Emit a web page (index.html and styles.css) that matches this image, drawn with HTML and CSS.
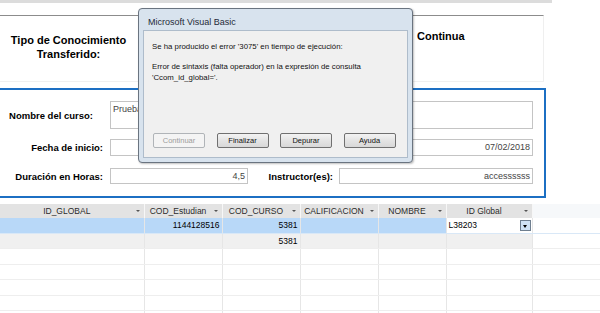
FILE: index.html
```html
<!DOCTYPE html>
<html lang="es">
  <head>
    <meta charset="UTF-8" />
    <meta name="viewport" content="width=device-width, initial-scale=1.0" />
    <title>Cursos - Microsoft Access</title>
    <link rel="stylesheet" href="styles.css">
  </head>
  <body>
    <!-- top strip of the form -->
    <div class="top-band"></div>

    <div class="panel-top">
      <div class="tipo">Tipo de Conocimiento<br />Transferido:</div>
      <div class="continua">Continua</div>
    </div>

    <!-- course details -->
    <div class="course">
      <div class="row">
        <label class="lbl lbl-nombre">Nombre del curso:</label>
        <div class="box box-big">Prueba</div>
      </div>
      <div class="row">
        <label class="lbl">Fecha de inicio:</label>
        <div class="box box-wide right">07/02/2018</div>
      </div>
      <div class="row">
        <label class="lbl">Duración en Horas:</label>
        <div class="box box-hours right">4,5</div>
        <label class="lbl lbl-instr">Instructor(es):</label>
        <div class="box box-instr right">accessssss</div>
      </div>
    </div>

    <!-- datasheet -->
    <table class="sheet">
      <colgroup>
        <col class="c1" /><col class="c2" /><col class="c3" /><col class="c4" /><col class="c5" /><col class="c6" /><col />
      </colgroup>
      <thead>
        <tr>
          <th><span>ID_GLOBAL</span><i class="arr"></i></th>
          <th><span>COD_Estudian</span><i class="arr"></i></th>
          <th><span>COD_CURSO</span><i class="arr"></i></th>
          <th><span>CALIFICACION</span><i class="arr"></i></th>
          <th><span>NOMBRE</span><i class="arr"></i></th>
          <th><span>ID Global</span><i class="arr"></i></th>
          <th class="blank"></th>
        </tr>
      </thead>
      <tbody>
        <tr class="sel">
          <td></td>
          <td class="num">1144128516</td>
          <td class="num">5381</td>
          <td></td>
          <td></td>
          <td class="combo"><span>L38203</span><b class="drop"></b></td>
          <td class="out"></td>
        </tr>
        <tr class="new">
          <td></td>
          <td></td>
          <td class="num">5381</td>
          <td></td>
          <td></td>
          <td></td>
          <td class="out"></td>
        </tr>
        <tr><td></td><td></td><td></td><td></td><td></td><td></td><td class="out"></td></tr>
        <tr><td></td><td></td><td></td><td></td><td></td><td></td><td class="out"></td></tr>
        <tr><td></td><td></td><td></td><td></td><td></td><td></td><td class="out"></td></tr>
        <tr><td></td><td></td><td></td><td></td><td></td><td></td><td class="out"></td></tr>
        <tr><td></td><td></td><td></td><td></td><td></td><td></td><td class="out"></td></tr>
      </tbody>
    </table>

    <!-- runtime error message box -->
    <div class="msgbox">
      <div class="msg-title">Microsoft Visual Basic</div>
      <div class="msg-body">
        <p class="msg-line">Se ha producido el error '3075' en tiempo de ejecución:</p>
        <p class="msg-line">Error de sintaxis (falta operador) en la expresión de consulta<br />'Ccom_id_global='.</p>
        <div class="msg-buttons">
          <button class="btn" disabled>Continuar</button>
          <button class="btn">Finalizar</button>
          <button class="btn">Depurar</button>
          <button class="btn">Ayuda</button>
        </div>
      </div>
    </div>
  </body>
</html>
```

FILE: styles.css
```css
body {
  margin: 0;
  width: 600px;
  height: 313px;
  overflow: hidden;
  position: relative;
  background: #fff;
  font-family: "Liberation Sans", Arial, sans-serif;
  color: #000;
}

.top-band {
  width: 552px;
  height: 3px;
  background: #dcdcdc;
}

.panel-top {
  display: flex;
  width: 543px;
  height: 65px;
  margin-top: 12px;
  border-top: 1px solid #8c8c8c;
  border-right: 1px solid #efefef;
  border-bottom: 1px solid #f0f0f0;
  font-weight: bold;
  font-size: 11px;
}

.tipo {
  width: 137px;
  margin-top: 17px;
  text-align: center;
  line-height: 14px;
}

.continua {
  margin-left: 280px;
  margin-top: 14px;
}

.course {
  width: 544px;
  margin-top: 6px;
  border: 2px solid #1c6fc3;
  border-left: none;
  padding: 11px 0 12px 0;
  display: flex;
  flex-direction: column;
  gap: 10px;
}

.course .row:last-child {
  margin-top: 2px;
}

.row {
  display: flex;
  align-items: center;
}

.lbl {
  width: 103px;
  margin-right: 7px;
  text-align: right;
  font-weight: bold;
  font-size: 9.5px;
}

.lbl-nombre {
  padding-right: 10px;
  width: 93px;
}

.lbl-instr {
  width: 85px;
  margin-right: 6px;
}

.box {
  box-sizing: border-box;
  height: 16px;
  border: 1px solid #c4c4c4;
  background: #fff;
  font-size: 9px;
  color: #444;
  padding: 1px 2px 0 2px;
  line-height: 13px;
}

.right {
  text-align: right;
}

.box-big {
  width: 423px;
  height: 28px;
}

.box-wide {
  width: 423px;
  height: 17px;
}

.box-hours {
  width: 138px;
}

.box-instr {
  width: 194px;
}

/* datasheet */
.sheet {
  margin-top: 6px;
  width: 600px;
  border-collapse: collapse;
  table-layout: fixed;
  font-size: 8.5px;
}

.c1 { width: 144px; }
.c2 { width: 78px; }
.c3 { width: 78px; }
.c4 { width: 78px; }
.c5 { width: 68px; }
.c6 { width: 86px; }

.sheet th {
  height: 14px;
  padding: 0;
  background: #e3e3e3;
  border-right: 1px solid #f7f7f7;
  font-weight: normal;
  color: #2b2b2b;
  position: relative;
}

.sheet th span {
  display: block;
  padding-right: 10px;
  text-align: center;
}

.sheet th.blank {
  background: #f6f8fa;
  border: none;
}

.arr {
  position: absolute;
  right: 4px;
  top: 6px;
  border-left: 2px solid transparent;
  border-right: 2px solid transparent;
  border-top: 2px solid #555;
}

.sheet td {
  height: 14.5px;
  padding: 0 2px;
  border-right: 1px solid #e6e6e6;
  border-bottom: 1px solid #eeeeee;
}

.sheet td.out {
  border-right: none;
}

.sheet td.num {
  text-align: right;
}

.sel td {
  background: #b8d8f8;
  border-bottom-color: #d9e8f7;
}

.sel td.out,
.sel td.combo {
  background: #fff;
}

.new td {
  background: #f0f0f0;
}

.new td.out {
  background: #fff;
}

.combo {
  position: relative;
}

.drop {
  position: absolute;
  right: 1px;
  top: 2px;
  width: 9px;
  height: 9px;
  border: 1px solid #6f7f90;
  background: #cfe2f5;
}

.drop::after {
  content: "";
  position: absolute;
  left: 2px;
  top: 4px;
  border-left: 2.5px solid transparent;
  border-right: 2.5px solid transparent;
  border-top: 3px solid #000;
}

/* message box */
.msgbox {
  position: absolute;
  left: 138px;
  top: 8px;
  width: 273px;
  height: 153px;
  border: 1px solid #6a7480;
  border-radius: 4px;
  background: #d8e3ee;
  box-shadow: 1px 1px 2px rgba(0, 0, 0, 0.25);
}

.msg-title {
  height: 21px;
  padding-left: 9px;
  line-height: 27px;
  font-size: 9px;
  color: #1e2a38;
}

.msg-body {
  box-sizing: border-box;
  margin: 0 4px;
  height: 128px;
  background: #f0f0f0;
  border: 1px solid #aebccb;
  padding: 10px 8px 0 8px;
  font-size: 7.8px;
  color: #111;
}

.msg-line {
  margin: 0 0 9px 0;
  line-height: 11px;
}

.msg-buttons {
  display: flex;
  gap: 11.5px;
  margin-top: 50px;
  padding-left: 1px;
}

.btn {
  width: 52px;
  height: 15px;
  padding: 0;
  border: 1px solid #707070;
  border-radius: 2px;
  background: linear-gradient(#f3f3f3, #e4e4e4 50%, #d8d8d8);
  font-family: "Liberation Sans", Arial, sans-serif;
  font-size: 7.5px;
  color: #111;
}

.btn:disabled {
  border-color: #b0b4b8;
  background: #f4f4f4;
  color: #9c9c9c;
}
```
